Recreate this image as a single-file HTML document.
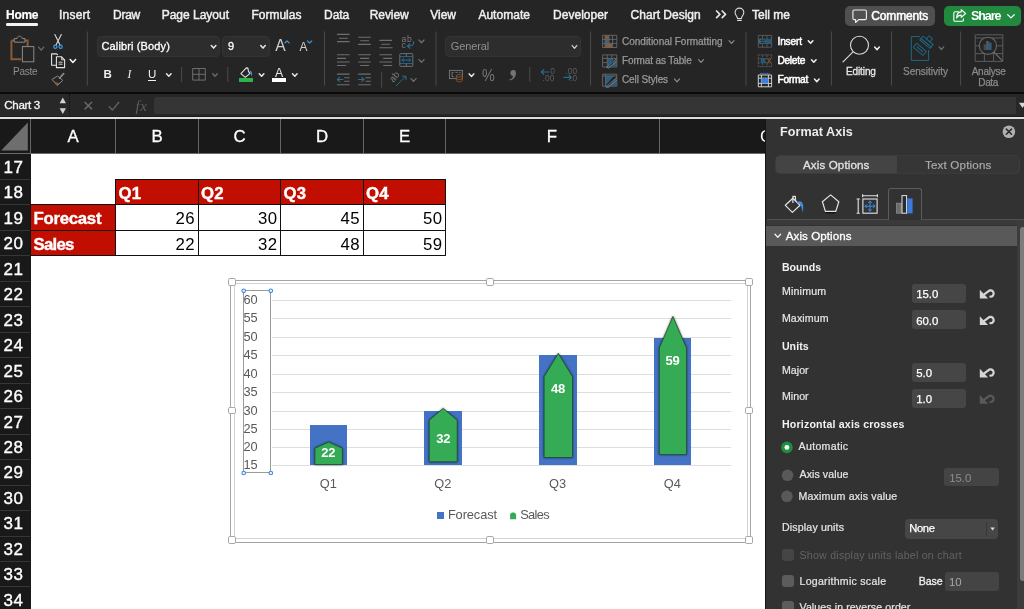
<!DOCTYPE html>
<html><head><meta charset="utf-8"><title>Excel</title>
<style>
html,body{margin:0;padding:0;background:#252525;}
body{width:1024px;height:609px;overflow:hidden;position:relative;font-family:"Liberation Sans",sans-serif;}
.t{position:absolute;white-space:pre;height:20px;display:block;}
.r{position:absolute;display:block;overflow:visible;}
#w{position:absolute;left:0;top:0;width:1024px;height:609px;overflow:hidden;will-change:transform;}
</style></head><body><div id="w">
<div class="r" style="left:0.00px;top:0.00px;width:1024.00px;height:92.30px;background:#252525;"></div>
<span class="t " style="left:6.00px;top:4.60px;font:700 12px 'Liberation Sans', sans-serif;line-height:20px;color:#ffffff;letter-spacing:-0.286px;-webkit-text-stroke:0.2px #ffffff;">Home</span>
<span class="t " style="left:59.00px;top:4.60px;font:400 12px 'Liberation Sans', sans-serif;line-height:20px;color:#f0f0f0;letter-spacing:0.214px;-webkit-text-stroke:0.45px #f0f0f0;">Insert</span>
<span class="t " style="left:113.00px;top:4.60px;font:400 12px 'Liberation Sans', sans-serif;line-height:20px;color:#f0f0f0;letter-spacing:-0.254px;-webkit-text-stroke:0.45px #f0f0f0;">Draw</span>
<span class="t " style="left:161.70px;top:4.60px;font:400 12px 'Liberation Sans', sans-serif;line-height:20px;color:#f0f0f0;letter-spacing:-0.008px;-webkit-text-stroke:0.45px #f0f0f0;">Page Layout</span>
<span class="t " style="left:251.40px;top:4.60px;font:400 12px 'Liberation Sans', sans-serif;line-height:20px;color:#f0f0f0;letter-spacing:0.011px;-webkit-text-stroke:0.45px #f0f0f0;">Formulas</span>
<span class="t " style="left:324.00px;top:4.60px;font:400 12px 'Liberation Sans', sans-serif;line-height:20px;color:#f0f0f0;letter-spacing:-0.040px;-webkit-text-stroke:0.45px #f0f0f0;">Data</span>
<span class="t " style="left:369.80px;top:4.60px;font:400 12px 'Liberation Sans', sans-serif;line-height:20px;color:#f0f0f0;letter-spacing:-0.093px;-webkit-text-stroke:0.45px #f0f0f0;">Review</span>
<span class="t " style="left:430.20px;top:4.60px;font:400 12px 'Liberation Sans', sans-serif;line-height:20px;color:#f0f0f0;letter-spacing:0.001px;-webkit-text-stroke:0.45px #f0f0f0;">View</span>
<span class="t " style="left:478.40px;top:4.60px;font:400 12px 'Liberation Sans', sans-serif;line-height:20px;color:#f0f0f0;letter-spacing:0.028px;-webkit-text-stroke:0.45px #f0f0f0;">Automate</span>
<span class="t " style="left:553.00px;top:4.60px;font:400 12px 'Liberation Sans', sans-serif;line-height:20px;color:#f0f0f0;letter-spacing:0.033px;-webkit-text-stroke:0.45px #f0f0f0;">Developer</span>
<span class="t " style="left:630.60px;top:4.60px;font:400 12px 'Liberation Sans', sans-serif;line-height:20px;color:#f0f0f0;letter-spacing:0.006px;-webkit-text-stroke:0.45px #f0f0f0;">Chart Design</span>
<span class="t " style="left:752.00px;top:4.60px;font:400 12px 'Liberation Sans', sans-serif;line-height:20px;color:#f0f0f0;letter-spacing:-0.002px;-webkit-text-stroke:0.45px #f0f0f0;">Tell me</span>
<div class="r" style="left:6.00px;top:23.30px;width:32.30px;height:2.50px;background:#f2f2f2;border-radius:1.2px;"></div>
<div class="r" style="left:845.00px;top:5.50px;width:90.00px;height:20.70px;background:#505050;border-radius:5px;"></div>
<span class="t " style="left:871.30px;top:6.20px;font:400 12px 'Liberation Sans', sans-serif;line-height:20px;color:#ffffff;letter-spacing:-0.164px;-webkit-text-stroke:0.5px #ffffff;">Comments</span>
<div class="r" style="left:944.00px;top:5.50px;width:76.50px;height:20.70px;background:#218a3e;border-radius:5px;"></div>
<span class="t " style="left:971.00px;top:6.10px;font:700 12.5px 'Liberation Sans', sans-serif;line-height:20px;color:#ffffff;letter-spacing:-1.070px;">Share</span>
<span class="t " style="left:13.00px;top:61.60px;font:400 10px 'Liberation Sans', sans-serif;line-height:20px;color:#8f8f8f;letter-spacing:-0.276px;">Paste</span>
<div class="r" style="left:97.00px;top:36.20px;width:123.30px;height:20.50px;background:#2d2d2d;border-radius:4px;box-sizing:border-box;border:1px solid #343434;"></div>
<div class="r" style="left:222.30px;top:36.20px;width:47.50px;height:20.50px;background:#2d2d2d;border-radius:4px;box-sizing:border-box;border:1px solid #343434;"></div>
<span class="t " style="left:101.50px;top:35.90px;font:400 11px 'Liberation Sans', sans-serif;line-height:20px;color:#ffffff;letter-spacing:0.133px;-webkit-text-stroke:0.3px #ffffff;">Calibri (Body)</span>
<span class="t " style="left:228.00px;top:36.20px;font:400 11px 'Liberation Sans', sans-serif;line-height:20px;color:#ffffff;-webkit-text-stroke:0.3px #ffffff;">9</span>
<span class="t " style="left:103.60px;top:64.20px;font:700 11.5px 'Liberation Sans', sans-serif;line-height:20px;color:#f0f0f0;">B</span>
<span class="t " style="left:127.50px;top:64.20px;font:italic 400 11.5px 'Liberation Serif', serif;line-height:20px;color:#f0f0f0;">I</span>
<span class="t " style="left:148.00px;top:63.80px;font:400 11.5px 'Liberation Sans', sans-serif;line-height:20px;color:#f0f0f0;">U</span>
<div class="r" style="left:147.80px;top:80.30px;width:8.40px;height:1.00px;background:#f0f0f0;"></div>
<div class="r" style="left:445.30px;top:36.30px;width:135.70px;height:20.40px;background:#2d2d2d;border-radius:4px;box-sizing:border-box;border:1px solid #343434;"></div>
<span class="t " style="left:450.80px;top:35.90px;font:400 11px 'Liberation Sans', sans-serif;line-height:20px;color:#8f8f8f;letter-spacing:-0.134px;">General</span>
<span class="t" style="left:482.2px;top:65.5px;font:400 16.6px 'Liberation Sans',sans-serif;line-height:20px;color:#757575;transform:scaleX(0.87);transform-origin:0 0;">%</span>
<span class="t " style="left:622.00px;top:31.60px;font:400 10px 'Liberation Sans', sans-serif;line-height:20px;color:#9a9a9a;letter-spacing:-0.005px;-webkit-text-stroke:0.25px #9a9a9a;">Conditional Formatting</span>
<span class="t " style="left:622.00px;top:50.70px;font:400 10px 'Liberation Sans', sans-serif;line-height:20px;color:#9a9a9a;letter-spacing:-0.128px;-webkit-text-stroke:0.25px #9a9a9a;">Format as Table</span>
<span class="t " style="left:622.00px;top:70.00px;font:400 10px 'Liberation Sans', sans-serif;line-height:20px;color:#9a9a9a;letter-spacing:-0.114px;-webkit-text-stroke:0.25px #9a9a9a;">Cell Styles</span>
<span class="t " style="left:777.50px;top:31.50px;font:400 10.2px 'Liberation Sans', sans-serif;line-height:20px;color:#ffffff;letter-spacing:-0.197px;-webkit-text-stroke:0.5px #ffffff;">Insert</span>
<span class="t " style="left:777.50px;top:50.50px;font:400 10.2px 'Liberation Sans', sans-serif;line-height:20px;color:#ffffff;letter-spacing:-0.326px;-webkit-text-stroke:0.5px #ffffff;">Delete</span>
<span class="t " style="left:777.50px;top:70.00px;font:400 10.2px 'Liberation Sans', sans-serif;line-height:20px;color:#ffffff;letter-spacing:-0.294px;-webkit-text-stroke:0.5px #ffffff;">Format</span>
<span class="t " style="left:846.00px;top:61.50px;font:400 10px 'Liberation Sans', sans-serif;line-height:20px;color:#e6e6e6;letter-spacing:-0.111px;-webkit-text-stroke:0.3px #e6e6e6;">Editing</span>
<span class="t " style="left:903.00px;top:61.70px;font:400 10px 'Liberation Sans', sans-serif;line-height:20px;color:#8a8a8a;letter-spacing:-0.001px;-webkit-text-stroke:0.25px #8a8a8a;">Sensitivity</span>
<span class="t " style="left:971.70px;top:62.20px;font:400 10px 'Liberation Sans', sans-serif;line-height:20px;color:#8a8a8a;letter-spacing:-0.240px;-webkit-text-stroke:0.25px #8a8a8a;">Analyse</span>
<span class="t " style="left:978.30px;top:72.80px;font:400 10px 'Liberation Sans', sans-serif;line-height:20px;color:#8a8a8a;letter-spacing:-0.356px;-webkit-text-stroke:0.25px #8a8a8a;">Data</span>
<div class="r" style="left:0.00px;top:92.40px;width:1024.00px;height:1.80px;background:#0b0b0b;"></div>
<div class="r" style="left:0.00px;top:94.10px;width:1024.00px;height:22.30px;background:#272727;"></div>
<div class="r" style="left:0.00px;top:94.40px;width:70.00px;height:22.00px;background:#282828;"></div>
<div class="r" style="left:69.4px;top:94.4px;width:0;height:22px;border-left:1px dotted #101010;"></div>
<div class="r" style="left:0.00px;top:115.80px;width:1024.00px;height:1.10px;background:#1c1c1c;"></div>
<div class="r" style="left:154.30px;top:97.20px;width:861.80px;height:16.60px;background:#353535;border-radius:3px 0 0 3px;"></div>
<div class="r" style="left:0.00px;top:116.90px;width:1024.00px;height:2.40px;background:#dedede;"></div>
<span class="t " style="left:4.30px;top:95.40px;font:400 11.6px 'Liberation Sans', sans-serif;line-height:20px;color:#f4f4f4;letter-spacing:-0.333px;-webkit-text-stroke:0.3px #f4f4f4;">Chart 3</span>
<span class="t " style="left:135.50px;top:95.60px;font:italic 400 15px 'Liberation Serif', serif;line-height:20px;color:#5e5e5e;letter-spacing:0.536px;">fx</span>
<div class="r" style="left:0.00px;top:119.00px;width:766.00px;height:490.00px;background:#ffffff;"></div>
<div class="r" style="left:0.00px;top:119.00px;width:766.00px;height:34.40px;background:#191919;"></div>
<div class="r" style="left:0.00px;top:119.00px;width:30.60px;height:490.00px;background:#191919;"></div>
<div class="r" style="left:30.10px;top:119.00px;width:1.00px;height:34.40px;background:#666666;"></div>
<div class="r" style="left:115.10px;top:119.00px;width:1.00px;height:34.40px;background:#666666;"></div>
<div class="r" style="left:197.70px;top:119.00px;width:1.00px;height:34.40px;background:#666666;"></div>
<div class="r" style="left:280.20px;top:119.00px;width:1.00px;height:34.40px;background:#666666;"></div>
<div class="r" style="left:362.70px;top:119.00px;width:1.00px;height:34.40px;background:#666666;"></div>
<div class="r" style="left:445.20px;top:119.00px;width:1.00px;height:34.40px;background:#666666;"></div>
<div class="r" style="left:658.60px;top:119.00px;width:1.00px;height:34.40px;background:#666666;"></div>
<div class="r" style="left:0.00px;top:152.90px;width:766.00px;height:0.90px;background:#6a6a6a;"></div>
<span class="t " style="left:-26.80px;width:200px;text-align:center;top:126.60px;font:400 16.8px 'Liberation Sans', sans-serif;line-height:20px;color:#ffffff;-webkit-text-stroke:0.3px #ffffff;">A</span>
<span class="t " style="left:57.00px;width:200px;text-align:center;top:126.60px;font:400 16.8px 'Liberation Sans', sans-serif;line-height:20px;color:#ffffff;-webkit-text-stroke:0.3px #ffffff;">B</span>
<span class="t " style="left:139.50px;width:200px;text-align:center;top:126.60px;font:400 16.8px 'Liberation Sans', sans-serif;line-height:20px;color:#ffffff;-webkit-text-stroke:0.3px #ffffff;">C</span>
<span class="t " style="left:222.00px;width:200px;text-align:center;top:126.60px;font:400 16.8px 'Liberation Sans', sans-serif;line-height:20px;color:#ffffff;-webkit-text-stroke:0.3px #ffffff;">D</span>
<span class="t " style="left:304.50px;width:200px;text-align:center;top:126.60px;font:400 16.8px 'Liberation Sans', sans-serif;line-height:20px;color:#ffffff;-webkit-text-stroke:0.3px #ffffff;">E</span>
<span class="t " style="left:452.00px;width:200px;text-align:center;top:126.60px;font:400 16.8px 'Liberation Sans', sans-serif;line-height:20px;color:#ffffff;-webkit-text-stroke:0.3px #ffffff;">F</span>
<span class="t " style="left:760.00px;top:126.60px;font:400 16.8px 'Liberation Sans', sans-serif;line-height:20px;color:#ffffff;clip-path:inset(0 6.5px 0 0);">G</span>
<span class="t " style="left:3.50px;top:157.80px;font:400 17px 'Liberation Sans', sans-serif;line-height:20px;color:#ffffff;letter-spacing:0.639px;-webkit-text-stroke:0.35px #ffffff;">17</span>
<div class="r" style="left:0.00px;top:178.97px;width:30.00px;height:1.00px;background:#363636;"></div>
<span class="t " style="left:3.50px;top:183.27px;font:400 17px 'Liberation Sans', sans-serif;line-height:20px;color:#ffffff;letter-spacing:0.639px;-webkit-text-stroke:0.35px #ffffff;">18</span>
<div class="r" style="left:0.00px;top:204.44px;width:30.00px;height:1.00px;background:#363636;"></div>
<span class="t " style="left:3.50px;top:208.74px;font:400 17px 'Liberation Sans', sans-serif;line-height:20px;color:#ffffff;letter-spacing:0.639px;-webkit-text-stroke:0.35px #ffffff;">19</span>
<div class="r" style="left:0.00px;top:229.91px;width:30.00px;height:1.00px;background:#363636;"></div>
<span class="t " style="left:3.50px;top:234.21px;font:400 17px 'Liberation Sans', sans-serif;line-height:20px;color:#ffffff;letter-spacing:0.639px;-webkit-text-stroke:0.35px #ffffff;">20</span>
<div class="r" style="left:0.00px;top:255.38px;width:30.00px;height:1.00px;background:#363636;"></div>
<span class="t " style="left:3.50px;top:259.68px;font:400 17px 'Liberation Sans', sans-serif;line-height:20px;color:#ffffff;letter-spacing:0.639px;-webkit-text-stroke:0.35px #ffffff;">21</span>
<div class="r" style="left:0.00px;top:280.85px;width:30.00px;height:1.00px;background:#363636;"></div>
<span class="t " style="left:3.50px;top:285.15px;font:400 17px 'Liberation Sans', sans-serif;line-height:20px;color:#ffffff;letter-spacing:0.639px;-webkit-text-stroke:0.35px #ffffff;">22</span>
<div class="r" style="left:0.00px;top:306.32px;width:30.00px;height:1.00px;background:#363636;"></div>
<span class="t " style="left:3.50px;top:310.62px;font:400 17px 'Liberation Sans', sans-serif;line-height:20px;color:#ffffff;letter-spacing:0.639px;-webkit-text-stroke:0.35px #ffffff;">23</span>
<div class="r" style="left:0.00px;top:331.79px;width:30.00px;height:1.00px;background:#363636;"></div>
<span class="t " style="left:3.50px;top:336.09px;font:400 17px 'Liberation Sans', sans-serif;line-height:20px;color:#ffffff;letter-spacing:0.639px;-webkit-text-stroke:0.35px #ffffff;">24</span>
<div class="r" style="left:0.00px;top:357.26px;width:30.00px;height:1.00px;background:#363636;"></div>
<span class="t " style="left:3.50px;top:361.56px;font:400 17px 'Liberation Sans', sans-serif;line-height:20px;color:#ffffff;letter-spacing:0.639px;-webkit-text-stroke:0.35px #ffffff;">25</span>
<div class="r" style="left:0.00px;top:382.73px;width:30.00px;height:1.00px;background:#363636;"></div>
<span class="t " style="left:3.50px;top:387.03px;font:400 17px 'Liberation Sans', sans-serif;line-height:20px;color:#ffffff;letter-spacing:0.639px;-webkit-text-stroke:0.35px #ffffff;">26</span>
<div class="r" style="left:0.00px;top:408.20px;width:30.00px;height:1.00px;background:#363636;"></div>
<span class="t " style="left:3.50px;top:412.50px;font:400 17px 'Liberation Sans', sans-serif;line-height:20px;color:#ffffff;letter-spacing:0.639px;-webkit-text-stroke:0.35px #ffffff;">27</span>
<div class="r" style="left:0.00px;top:433.67px;width:30.00px;height:1.00px;background:#363636;"></div>
<span class="t " style="left:3.50px;top:437.97px;font:400 17px 'Liberation Sans', sans-serif;line-height:20px;color:#ffffff;letter-spacing:0.639px;-webkit-text-stroke:0.35px #ffffff;">28</span>
<div class="r" style="left:0.00px;top:459.14px;width:30.00px;height:1.00px;background:#363636;"></div>
<span class="t " style="left:3.50px;top:463.44px;font:400 17px 'Liberation Sans', sans-serif;line-height:20px;color:#ffffff;letter-spacing:0.639px;-webkit-text-stroke:0.35px #ffffff;">29</span>
<div class="r" style="left:0.00px;top:484.61px;width:30.00px;height:1.00px;background:#363636;"></div>
<span class="t " style="left:3.50px;top:488.91px;font:400 17px 'Liberation Sans', sans-serif;line-height:20px;color:#ffffff;letter-spacing:0.639px;-webkit-text-stroke:0.35px #ffffff;">30</span>
<div class="r" style="left:0.00px;top:510.08px;width:30.00px;height:1.00px;background:#363636;"></div>
<span class="t " style="left:3.50px;top:514.38px;font:400 17px 'Liberation Sans', sans-serif;line-height:20px;color:#ffffff;letter-spacing:0.639px;-webkit-text-stroke:0.35px #ffffff;">31</span>
<div class="r" style="left:0.00px;top:535.55px;width:30.00px;height:1.00px;background:#363636;"></div>
<span class="t " style="left:3.50px;top:539.85px;font:400 17px 'Liberation Sans', sans-serif;line-height:20px;color:#ffffff;letter-spacing:0.639px;-webkit-text-stroke:0.35px #ffffff;">32</span>
<div class="r" style="left:0.00px;top:561.02px;width:30.00px;height:1.00px;background:#363636;"></div>
<span class="t " style="left:3.50px;top:565.32px;font:400 17px 'Liberation Sans', sans-serif;line-height:20px;color:#ffffff;letter-spacing:0.639px;-webkit-text-stroke:0.35px #ffffff;">33</span>
<div class="r" style="left:0.00px;top:586.49px;width:30.00px;height:1.00px;background:#363636;"></div>
<span class="t " style="left:3.50px;top:590.79px;font:400 17px 'Liberation Sans', sans-serif;line-height:20px;color:#ffffff;letter-spacing:0.639px;-webkit-text-stroke:0.35px #ffffff;">34</span>
<div class="r" style="left:115.60px;top:179.40px;width:330.60px;height:25.40px;background:#c10e00;"></div>
<div class="r" style="left:30.60px;top:204.80px;width:85.00px;height:50.80px;background:#c10e00;"></div>
<div class="r" style="left:115.10px;top:178.80px;width:331.10px;height:1.20px;background:#111;"></div>
<div class="r" style="left:30.10px;top:204.20px;width:416.10px;height:1.20px;background:#111;"></div>
<div class="r" style="left:30.10px;top:229.60px;width:416.10px;height:1.20px;background:#111;"></div>
<div class="r" style="left:30.10px;top:255.00px;width:416.10px;height:1.20px;background:#111;"></div>
<div class="r" style="left:115.00px;top:178.80px;width:1.20px;height:76.80px;background:#111;"></div>
<div class="r" style="left:197.60px;top:178.80px;width:1.20px;height:76.80px;background:#111;"></div>
<div class="r" style="left:280.10px;top:178.80px;width:1.20px;height:76.80px;background:#111;"></div>
<div class="r" style="left:362.60px;top:178.80px;width:1.20px;height:76.80px;background:#111;"></div>
<div class="r" style="left:445.10px;top:178.80px;width:1.20px;height:76.80px;background:#111;"></div>
<div class="r" style="left:445.30px;top:178.80px;width:1.20px;height:76.80px;background:#111;"></div>
<div class="r" style="left:30.00px;top:204.80px;width:1.20px;height:51.40px;background:#111;"></div>
<span class="t " style="left:118.40px;top:183.80px;font:700 16.8px 'Liberation Sans', sans-serif;line-height:20px;color:#ffffff;letter-spacing:0.305px;-webkit-text-stroke:0.4px #ffffff;">Q1</span>
<span class="t " style="left:201.00px;top:183.80px;font:700 16.8px 'Liberation Sans', sans-serif;line-height:20px;color:#ffffff;letter-spacing:0.305px;-webkit-text-stroke:0.4px #ffffff;">Q2</span>
<span class="t " style="left:283.50px;top:183.80px;font:700 16.8px 'Liberation Sans', sans-serif;line-height:20px;color:#ffffff;letter-spacing:0.305px;-webkit-text-stroke:0.4px #ffffff;">Q3</span>
<span class="t " style="left:366.00px;top:183.80px;font:700 16.8px 'Liberation Sans', sans-serif;line-height:20px;color:#ffffff;letter-spacing:0.305px;-webkit-text-stroke:0.4px #ffffff;">Q4</span>
<span class="t " style="left:33.60px;top:209.20px;font:700 16.8px 'Liberation Sans', sans-serif;line-height:20px;color:#ffffff;letter-spacing:-0.294px;-webkit-text-stroke:0.4px #ffffff;">Forecast</span>
<span class="t " style="left:33.60px;top:234.60px;font:700 16.8px 'Liberation Sans', sans-serif;line-height:20px;color:#ffffff;letter-spacing:-0.772px;-webkit-text-stroke:0.4px #ffffff;">Sales</span>
<span class="t " style="right:828.80px;top:209.20px;font:400 16.8px 'Liberation Sans', sans-serif;line-height:20px;color:#000000;letter-spacing:0.5px;">26</span>
<span class="t " style="right:746.30px;top:209.20px;font:400 16.8px 'Liberation Sans', sans-serif;line-height:20px;color:#000000;letter-spacing:0.5px;">30</span>
<span class="t " style="right:663.80px;top:209.20px;font:400 16.8px 'Liberation Sans', sans-serif;line-height:20px;color:#000000;letter-spacing:0.5px;">45</span>
<span class="t " style="right:581.30px;top:209.20px;font:400 16.8px 'Liberation Sans', sans-serif;line-height:20px;color:#000000;letter-spacing:0.5px;">50</span>
<span class="t " style="right:828.80px;top:234.60px;font:400 16.8px 'Liberation Sans', sans-serif;line-height:20px;color:#000000;letter-spacing:0.5px;">22</span>
<span class="t " style="right:746.30px;top:234.60px;font:400 16.8px 'Liberation Sans', sans-serif;line-height:20px;color:#000000;letter-spacing:0.5px;">32</span>
<span class="t " style="right:663.80px;top:234.60px;font:400 16.8px 'Liberation Sans', sans-serif;line-height:20px;color:#000000;letter-spacing:0.5px;">48</span>
<span class="t " style="right:581.30px;top:234.60px;font:400 16.8px 'Liberation Sans', sans-serif;line-height:20px;color:#000000;letter-spacing:0.5px;">59</span>
<div class="r" style="left:230px;top:279.9px;width:521.4px;height:262.8px;box-sizing:border-box;border:1.1px solid #a4a4a4;background:#fff;"></div>
<div class="r" style="left:233.5px;top:283px;width:514.4px;height:256.2px;box-sizing:border-box;border:1.1px solid #d2d2d2;background:#fff;"></div>
<div class="r" style="left:271.70px;top:299.70px;width:459.00px;height:1.00px;background:#dedede;"></div>
<div class="r" style="left:271.70px;top:318.20px;width:459.00px;height:1.00px;background:#dedede;"></div>
<div class="r" style="left:271.70px;top:336.60px;width:459.00px;height:1.00px;background:#dedede;"></div>
<div class="r" style="left:271.70px;top:354.90px;width:459.00px;height:1.00px;background:#dedede;"></div>
<div class="r" style="left:271.70px;top:373.50px;width:459.00px;height:1.00px;background:#dedede;"></div>
<div class="r" style="left:271.70px;top:392.00px;width:459.00px;height:1.00px;background:#dedede;"></div>
<div class="r" style="left:271.70px;top:410.70px;width:459.00px;height:1.00px;background:#dedede;"></div>
<div class="r" style="left:271.70px;top:428.80px;width:459.00px;height:1.00px;background:#dedede;"></div>
<div class="r" style="left:271.70px;top:447.20px;width:459.00px;height:1.00px;background:#dedede;"></div>
<div class="r" style="left:271.70px;top:464.90px;width:459.00px;height:1.00px;background:#dedede;"></div>
<div class="r" style="left:243.2px;top:290.3px;width:28.1px;height:183.2px;box-sizing:border-box;border:1.1px solid #9a9a9a;"></div>
<span class="t " style="left:243.40px;top:289.70px;font:400 12.8px 'Liberation Sans', sans-serif;line-height:20px;color:#595959;letter-spacing:0.033px;">60</span>
<span class="t " style="left:243.40px;top:308.20px;font:400 12.8px 'Liberation Sans', sans-serif;line-height:20px;color:#595959;letter-spacing:0.033px;">55</span>
<span class="t " style="left:243.40px;top:326.60px;font:400 12.8px 'Liberation Sans', sans-serif;line-height:20px;color:#595959;letter-spacing:0.033px;">50</span>
<span class="t " style="left:243.40px;top:344.90px;font:400 12.8px 'Liberation Sans', sans-serif;line-height:20px;color:#595959;letter-spacing:0.033px;">45</span>
<span class="t " style="left:243.40px;top:363.50px;font:400 12.8px 'Liberation Sans', sans-serif;line-height:20px;color:#595959;letter-spacing:0.033px;">40</span>
<span class="t " style="left:243.40px;top:382.00px;font:400 12.8px 'Liberation Sans', sans-serif;line-height:20px;color:#595959;letter-spacing:0.033px;">35</span>
<span class="t " style="left:243.40px;top:400.70px;font:400 12.8px 'Liberation Sans', sans-serif;line-height:20px;color:#595959;letter-spacing:0.033px;">30</span>
<span class="t " style="left:243.40px;top:418.80px;font:400 12.8px 'Liberation Sans', sans-serif;line-height:20px;color:#595959;letter-spacing:0.033px;">25</span>
<span class="t " style="left:243.40px;top:437.20px;font:400 12.8px 'Liberation Sans', sans-serif;line-height:20px;color:#595959;letter-spacing:0.033px;">20</span>
<span class="t " style="left:243.40px;top:454.90px;font:400 12.8px 'Liberation Sans', sans-serif;line-height:20px;color:#595959;letter-spacing:0.033px;">15</span>
<div class="r" style="left:310.10px;top:425.40px;width:36.70px;height:40.00px;background:#4472c4;"></div>
<div class="r" style="left:424.00px;top:410.80px;width:38.00px;height:54.60px;background:#4472c4;"></div>
<div class="r" style="left:539.30px;top:355.40px;width:37.40px;height:110.00px;background:#4472c4;"></div>
<div class="r" style="left:653.50px;top:337.70px;width:37.40px;height:127.70px;background:#4472c4;"></div>
<span class="t " style="left:228.20px;width:200px;text-align:center;top:443.40px;font:700 13px 'Liberation Sans', sans-serif;line-height:20px;color:#ffffff;z-index:5;letter-spacing:-0.3px;">22</span>
<span class="t " style="left:343.20px;width:200px;text-align:center;top:429.10px;font:700 13px 'Liberation Sans', sans-serif;line-height:20px;color:#ffffff;z-index:5;letter-spacing:-0.3px;">32</span>
<span class="t " style="left:457.90px;width:200px;text-align:center;top:378.90px;font:700 13px 'Liberation Sans', sans-serif;line-height:20px;color:#ffffff;z-index:5;letter-spacing:-0.3px;">48</span>
<span class="t " style="left:572.50px;width:200px;text-align:center;top:350.80px;font:700 13px 'Liberation Sans', sans-serif;line-height:20px;color:#ffffff;z-index:5;letter-spacing:-0.3px;">59</span>
<span class="t " style="left:228.40px;width:200px;text-align:center;top:473.60px;font:400 12.8px 'Liberation Sans', sans-serif;line-height:20px;color:#595959;">Q1</span>
<span class="t " style="left:342.90px;width:200px;text-align:center;top:473.60px;font:400 12.8px 'Liberation Sans', sans-serif;line-height:20px;color:#595959;">Q2</span>
<span class="t " style="left:457.60px;width:200px;text-align:center;top:473.60px;font:400 12.8px 'Liberation Sans', sans-serif;line-height:20px;color:#595959;">Q3</span>
<span class="t " style="left:572.30px;width:200px;text-align:center;top:473.60px;font:400 12.8px 'Liberation Sans', sans-serif;line-height:20px;color:#595959;">Q4</span>
<div class="r" style="left:436.60px;top:511.90px;width:7.40px;height:7.40px;background:#4472c4;"></div>
<span class="t " style="left:447.90px;top:504.90px;font:400 12.8px 'Liberation Sans', sans-serif;line-height:20px;color:#595959;letter-spacing:-0.087px;">Forecast</span>
<span class="t " style="left:520.20px;top:504.90px;font:400 12.8px 'Liberation Sans', sans-serif;line-height:20px;color:#595959;letter-spacing:-0.643px;">Sales</span>
<div class="r" style="left:228.1px;top:277.8px;width:7.7px;height:7.8px;box-sizing:border-box;border:1px solid #a8a8a8;border-radius:1.8px;background:#fff;"></div>
<div class="r" style="left:486.1px;top:277.8px;width:7.7px;height:7.8px;box-sizing:border-box;border:1px solid #a8a8a8;border-radius:1.8px;background:#fff;"></div>
<div class="r" style="left:745.0px;top:277.8px;width:7.7px;height:7.8px;box-sizing:border-box;border:1px solid #a8a8a8;border-radius:1.8px;background:#fff;"></div>
<div class="r" style="left:228.1px;top:406.5px;width:7.7px;height:7.8px;box-sizing:border-box;border:1px solid #a8a8a8;border-radius:1.8px;background:#fff;"></div>
<div class="r" style="left:745.0px;top:406.5px;width:7.7px;height:7.8px;box-sizing:border-box;border:1px solid #a8a8a8;border-radius:1.8px;background:#fff;"></div>
<div class="r" style="left:228.1px;top:536.2px;width:7.7px;height:7.8px;box-sizing:border-box;border:1px solid #a8a8a8;border-radius:1.8px;background:#fff;"></div>
<div class="r" style="left:486.1px;top:536.2px;width:7.7px;height:7.8px;box-sizing:border-box;border:1px solid #a8a8a8;border-radius:1.8px;background:#fff;"></div>
<div class="r" style="left:745.0px;top:536.2px;width:7.7px;height:7.8px;box-sizing:border-box;border:1px solid #a8a8a8;border-radius:1.8px;background:#fff;"></div>
<div class="r" style="left:765.20px;top:119.00px;width:259.00px;height:490.00px;background:#161616;"></div>
<div class="r" style="left:766.20px;top:119.00px;width:257.80px;height:490.00px;background:#323232;"></div>
<span class="t " style="left:780.00px;top:121.60px;font:700 12.6px 'Liberation Sans', sans-serif;line-height:20px;color:#ececec;letter-spacing:0.043px;">Format Axis</span>
<div class="r" style="left:776.00px;top:156.00px;width:242.50px;height:17.40px;background:#363636;border-radius:4px;box-shadow:0 0 0 0.6px #454545;"></div>
<div class="r" style="left:776.00px;top:156.00px;width:120.60px;height:17.40px;background:#444444;border-radius:4px 0 0 4px;"></div>
<span class="t " style="left:803.00px;top:154.70px;font:400 11.6px 'Liberation Sans', sans-serif;line-height:20px;color:#e2e2e2;letter-spacing:0.117px;-webkit-text-stroke:0.3px #e2e2e2;">Axis Options</span>
<span class="t " style="left:925.00px;top:154.70px;font:400 11.6px 'Liberation Sans', sans-serif;line-height:20px;color:#a8a8a8;letter-spacing:0.171px;-webkit-text-stroke:0.2px #a8a8a8;">Text Options</span>
<div class="r" style="left:766.60px;top:219.30px;width:257.40px;height:1.00px;background:#505050;"></div>
<div class="r" style="left:766.60px;top:220.30px;width:257.40px;height:5.00px;background:#3a3a3a;"></div>
<div class="r" style="left:887.6px;top:188.3px;width:34.4px;height:32px;box-sizing:border-box;border:1px solid #5c5c5c;border-bottom:none;border-radius:3px 3px 0 0;background:#323232;"></div>
<div class="r" style="left:766.20px;top:225.60px;width:250.40px;height:20.60px;background:#595959;"></div>
<div class="r" style="left:1016.60px;top:220.30px;width:7.40px;height:389.00px;background:#3c3c3c;"></div>
<div class="r" style="left:1019.60px;top:227.30px;width:6.00px;height:353.40px;background:#7c7c7c;border-radius:3px;"></div>
<span class="t " style="left:785.80px;top:225.80px;font:400 11.6px 'Liberation Sans', sans-serif;line-height:20px;color:#ffffff;letter-spacing:0.051px;-webkit-text-stroke:0.3px #ffffff;">Axis Options</span>
<span class="t " style="left:781.90px;top:256.80px;font:700 10.6px 'Liberation Sans', sans-serif;line-height:20px;color:#f2f2f2;letter-spacing:-0.056px;">Bounds</span>
<span class="t " style="left:781.90px;top:281.30px;font:400 10.6px 'Liberation Sans', sans-serif;line-height:20px;color:#e6e6e6;letter-spacing:0.204px;-webkit-text-stroke:0.2px #e6e6e6;">Minimum</span>
<span class="t " style="left:781.90px;top:307.60px;font:400 10.6px 'Liberation Sans', sans-serif;line-height:20px;color:#e6e6e6;letter-spacing:0.140px;-webkit-text-stroke:0.2px #e6e6e6;">Maximum</span>
<span class="t " style="left:781.90px;top:335.50px;font:700 10.6px 'Liberation Sans', sans-serif;line-height:20px;color:#f2f2f2;letter-spacing:0.063px;">Units</span>
<span class="t " style="left:781.90px;top:360.20px;font:400 10.6px 'Liberation Sans', sans-serif;line-height:20px;color:#e6e6e6;letter-spacing:0.060px;-webkit-text-stroke:0.2px #e6e6e6;">Major</span>
<span class="t " style="left:781.90px;top:386.20px;font:400 10.6px 'Liberation Sans', sans-serif;line-height:20px;color:#e6e6e6;letter-spacing:0.060px;-webkit-text-stroke:0.2px #e6e6e6;">Minor</span>
<div class="r" style="left:911.50px;top:283.50px;width:54.70px;height:19.40px;background:#464646;border-radius:3px;"></div>
<span class="t " style="left:916.20px;top:284.00px;font:400 11.4px 'Liberation Sans', sans-serif;line-height:20px;color:#ffffff;-webkit-text-stroke:0.25px #ffffff;">15.0</span>
<div class="r" style="left:911.50px;top:310.00px;width:54.70px;height:19.40px;background:#464646;border-radius:3px;"></div>
<span class="t " style="left:916.20px;top:310.50px;font:400 11.4px 'Liberation Sans', sans-serif;line-height:20px;color:#ffffff;-webkit-text-stroke:0.25px #ffffff;">60.0</span>
<div class="r" style="left:911.50px;top:362.50px;width:54.70px;height:19.40px;background:#464646;border-radius:3px;"></div>
<span class="t " style="left:916.20px;top:363.00px;font:400 11.4px 'Liberation Sans', sans-serif;line-height:20px;color:#ffffff;-webkit-text-stroke:0.25px #ffffff;">5.0</span>
<div class="r" style="left:911.50px;top:388.80px;width:54.70px;height:19.40px;background:#464646;border-radius:3px;"></div>
<span class="t " style="left:916.20px;top:389.30px;font:400 11.4px 'Liberation Sans', sans-serif;line-height:20px;color:#ffffff;-webkit-text-stroke:0.25px #ffffff;">1.0</span>
<span class="t " style="left:782.00px;top:414.40px;font:700 10.6px 'Liberation Sans', sans-serif;line-height:20px;color:#f2f2f2;letter-spacing:0.184px;">Horizontal axis crosses</span>
<span class="t " style="left:798.60px;top:436.30px;font:400 10.6px 'Liberation Sans', sans-serif;line-height:20px;color:#e6e6e6;letter-spacing:0.299px;-webkit-text-stroke:0.2px #e6e6e6;">Automatic</span>
<span class="t " style="left:799.50px;top:464.40px;font:400 10.6px 'Liberation Sans', sans-serif;line-height:20px;color:#e6e6e6;letter-spacing:0.080px;-webkit-text-stroke:0.2px #e6e6e6;">Axis value</span>
<span class="t " style="left:798.60px;top:485.50px;font:400 10.6px 'Liberation Sans', sans-serif;line-height:20px;color:#e6e6e6;letter-spacing:0.152px;-webkit-text-stroke:0.2px #e6e6e6;">Maximum axis value</span>
<div class="r" style="left:943.70px;top:467.80px;width:55.30px;height:18.40px;background:#444444;border-radius:3px;"></div>
<span class="t " style="left:949.20px;top:467.80px;font:400 11.4px 'Liberation Sans', sans-serif;line-height:20px;color:#8c8c8c;">15.0</span>
<span class="t " style="left:782.00px;top:516.90px;font:400 10.6px 'Liberation Sans', sans-serif;line-height:20px;color:#e6e6e6;letter-spacing:0.164px;-webkit-text-stroke:0.2px #e6e6e6;">Display units</span>
<div class="r" style="left:905.40px;top:519.40px;width:93.00px;height:19.40px;background:#464646;border-radius:4px;"></div>
<div class="r" style="left:986.20px;top:521.50px;width:0.80px;height:15.00px;background:#383838;"></div>
<span class="t " style="left:909.30px;top:517.80px;font:400 11.2px 'Liberation Sans', sans-serif;line-height:20px;color:#ffffff;letter-spacing:-0.387px;-webkit-text-stroke:0.25px #ffffff;">None</span>
<div class="r" style="left:781.90px;top:548.80px;width:12.00px;height:12.00px;background:#454545;border-radius:3px;"></div>
<div class="r" style="left:781.90px;top:575.00px;width:12.00px;height:12.00px;background:#5c5c5c;border-radius:3px;"></div>
<div class="r" style="left:781.90px;top:601.20px;width:12.00px;height:12.00px;background:#5c5c5c;border-radius:3px;"></div>
<span class="t " style="left:799.50px;top:544.80px;font:400 10.6px 'Liberation Sans', sans-serif;line-height:20px;color:#636363;letter-spacing:0.249px;">Show display units label on chart</span>
<span class="t " style="left:799.50px;top:571.10px;font:400 10.6px 'Liberation Sans', sans-serif;line-height:20px;color:#e6e6e6;letter-spacing:0.257px;-webkit-text-stroke:0.2px #e6e6e6;">Logarithmic scale</span>
<span class="t " style="left:918.80px;top:571.40px;font:400 10.6px 'Liberation Sans', sans-serif;line-height:20px;color:#f0f0f0;letter-spacing:-0.139px;-webkit-text-stroke:0.3px #f0f0f0;">Base</span>
<div class="r" style="left:944.70px;top:572.00px;width:54.30px;height:19.30px;background:#444444;border-radius:3px;"></div>
<span class="t " style="left:949.00px;top:572.40px;font:400 11.4px 'Liberation Sans', sans-serif;line-height:20px;color:#a8a8a8;">10</span>
<span class="t " style="left:799.50px;top:597.40px;font:400 10.6px 'Liberation Sans', sans-serif;line-height:20px;color:#e6e6e6;letter-spacing:0.098px;-webkit-text-stroke:0.2px #e6e6e6;">Values in reverse order</span>
<span class="t " style="left:275.20px;top:36.20px;font:400 15.6px 'Liberation Sans', sans-serif;line-height:20px;color:#cfcfcf;">A</span>
<span class="t " style="left:299.60px;top:37.00px;font:400 11.9px 'Liberation Sans', sans-serif;line-height:20px;color:#cfcfcf;">A</span>
<div class="r" style="left:239.00px;top:78.10px;width:14.00px;height:3.60px;background:#2eb34a;"></div>
<span class="t " style="left:275.00px;top:62.50px;font:400 12.3px 'Liberation Sans', sans-serif;line-height:20px;color:#e8e8e8;letter-spacing:0.797px;">A</span>
<div class="r" style="left:271.90px;top:78.10px;width:14.30px;height:3.60px;background:#ffffff;"></div>
<span class="t " style="left:401.60px;top:29.00px;font:400 8.6px 'Liberation Sans', sans-serif;line-height:20px;color:#7a7a7a;letter-spacing:0.519px;">ab</span>
<span class="t " style="left:401.60px;top:35.20px;font:400 8.6px 'Liberation Sans', sans-serif;line-height:20px;color:#7a7a7a;">c</span>
<span class="t" style="left:389px;top:66.6px;font:400 9.6px 'Liberation Sans',sans-serif;line-height:20px;color:#7a7a7a;transform:rotate(-52deg);transform-origin:50% 50%;">ab</span>
<span class="t " style="left:550.20px;top:60.90px;font:400 8.4px 'Liberation Sans', sans-serif;line-height:20px;color:#5e5e5e;">0</span>
<span class="t " style="left:542.60px;top:68.10px;font:400 8.4px 'Liberation Sans', sans-serif;line-height:20px;color:#5e5e5e;letter-spacing:0.048px;">.00</span>
<span class="t " style="left:565.40px;top:60.90px;font:400 8.4px 'Liberation Sans', sans-serif;line-height:20px;color:#5e5e5e;letter-spacing:0.048px;">.00</span>
<span class="t " style="left:570.20px;top:68.10px;font:400 8.4px 'Liberation Sans', sans-serif;line-height:20px;color:#5e5e5e;letter-spacing:0.100px;">.0</span>
<svg class="r" style="left:0;top:0" width="1024" height="609" viewBox="0 0 1024 609">
<path d="M716.6 11 L719.9 14.3 L716.6 17.6 M722.2 11 L725.5 14.3 L722.2 17.6" fill="none" stroke="#e4e4e4" stroke-width="1.7" stroke-linecap="round" stroke-linejoin="round"/>
<path d="M737.5 18.5 C737.5 16.4 735.1 15.4 735.1 12.5 A4.35 4.35 0 0 1 743.8 12.5 C743.8 15.4 741.4 16.4 741.4 18.5 Z" fill="none" stroke="#dcdcdc" stroke-width="1.1" stroke-linejoin="round"/><path d="M737.7 20.4 H741.2" stroke="#dcdcdc" stroke-width="1.3" stroke-linecap="round"/>
<path transform="translate(0 1.2)" d="M854.3 8.8 H865 A1.4 1.4 0 0 1 866.4 10.2 V17 A1.4 1.4 0 0 1 865 18.4 H858.6 L855.6 21.3 V18.4 H854.3 A1.4 1.4 0 0 1 852.9 17 V10.2 A1.4 1.4 0 0 1 854.3 8.8 Z" fill="none" stroke="#f0f0f0" stroke-width="1.1" stroke-linejoin="round"/>
<path transform="translate(0 0.5)" d="M958.5 11.3 H955.2 A1.4 1.4 0 0 0 953.8 12.7 V19.4 A1.4 1.4 0 0 0 955.2 20.8 H962 A1.4 1.4 0 0 0 963.4 19.4 V18.2" fill="none" stroke="#fff" stroke-width="1.1" stroke-linecap="round"/>
<path transform="translate(0 0.5)" d="M961.2 9.2 L965.6 13 L961.2 16.8 V14.6 C958.8 14.6 957.4 15.6 956.6 17.6 C956.6 14 958.2 11.6 961.2 11.4 Z" fill="none" stroke="#fff" stroke-width="1.1" stroke-linejoin="round"/>
<path d="M1007.75 14.70 L1011.00 17.90 L1014.25 14.70" fill="none" stroke="#ffffff" stroke-width="1.2" stroke-linecap="round" stroke-linejoin="round"/>
<path d="M87.30 31.50 L87.30 85.60" stroke="#4a4a4a" stroke-width="1" fill="none" />
<path d="M324.50 31.50 L324.50 85.60" stroke="#4a4a4a" stroke-width="1" fill="none" />
<path d="M436.00 31.50 L436.00 85.60" stroke="#4a4a4a" stroke-width="1" fill="none" />
<path d="M590.60 31.50 L590.60 85.60" stroke="#4a4a4a" stroke-width="1" fill="none" />
<path d="M746.00 31.50 L746.00 85.60" stroke="#4a4a4a" stroke-width="1" fill="none" />
<path d="M831.40 31.50 L831.40 85.60" stroke="#4a4a4a" stroke-width="1" fill="none" />
<path d="M891.50 31.50 L891.50 85.60" stroke="#4a4a4a" stroke-width="1" fill="none" />
<path d="M960.60 31.50 L960.60 85.60" stroke="#4a4a4a" stroke-width="1" fill="none" />
<path d="M181.60 67.00 L181.60 82.00" stroke="#4a4a4a" stroke-width="1" fill="none" />
<path d="M227.80 67.00 L227.80 82.00" stroke="#4a4a4a" stroke-width="1" fill="none" />
<path d="M529.80 67.00 L529.80 82.00" stroke="#4a4a4a" stroke-width="1" fill="none" />
<path d="M381.60 72.30 L381.60 87.50" stroke="#4a4a4a" stroke-width="1" fill="none" />
<path d="M211.30 45.50 L213.60 48.10 L215.90 45.50" fill="none" stroke="#e6e6e6" stroke-width="1.5" stroke-linecap="round" stroke-linejoin="round"/>
<path d="M260.70 45.50 L263.00 48.10 L265.30 45.50" fill="none" stroke="#e6e6e6" stroke-width="1.5" stroke-linecap="round" stroke-linejoin="round"/>
<path d="M166.50 73.70 L168.80 76.30 L171.10 73.70" fill="none" stroke="#e6e6e6" stroke-width="1.5" stroke-linecap="round" stroke-linejoin="round"/>
<path d="M212.70 73.70 L215.00 76.30 L217.30 73.70" fill="none" stroke="#6a6a6a" stroke-width="1.4" stroke-linecap="round" stroke-linejoin="round"/>
<path d="M259.30 73.70 L261.60 76.30 L263.90 73.70" fill="none" stroke="#e6e6e6" stroke-width="1.5" stroke-linecap="round" stroke-linejoin="round"/>
<path d="M292.50 73.70 L294.80 76.30 L297.10 73.70" fill="none" stroke="#e6e6e6" stroke-width="1.5" stroke-linecap="round" stroke-linejoin="round"/>
<path d="M572.20 45.60 L574.50 48.20 L576.80 45.60" fill="none" stroke="#c8c8c8" stroke-width="1.4" stroke-linecap="round" stroke-linejoin="round"/>
<path d="M469.20 73.90 L471.50 76.50 L473.80 73.90" fill="none" stroke="#e6e6e6" stroke-width="1.5" stroke-linecap="round" stroke-linejoin="round"/>
<path d="M512.7 70.1 A3.1 3.1 0 0 1 515.9 73.4 C515.9 77 513.4 79.6 509.6 80.4 L509.4 79.6 C511.6 78.8 512.9 77.6 513.1 76.2 A3.1 3.1 0 0 1 512.7 70.1 Z" fill="#757575"/>
<path d="M729.00 40.60 L731.50 43.40 L734.00 40.60" fill="none" stroke="#8a8a8a" stroke-width="1.2" stroke-linecap="round" stroke-linejoin="round"/>
<path d="M698.50 59.60 L701.00 62.40 L703.50 59.60" fill="none" stroke="#8a8a8a" stroke-width="1.2" stroke-linecap="round" stroke-linejoin="round"/>
<path d="M674.50 79.00 L677.00 81.80 L679.50 79.00" fill="none" stroke="#8a8a8a" stroke-width="1.2" stroke-linecap="round" stroke-linejoin="round"/>
<path d="M808.30 40.70 L810.60 43.30 L812.90 40.70" fill="none" stroke="#f0f0f0" stroke-width="1.5" stroke-linecap="round" stroke-linejoin="round"/>
<path d="M811.50 59.70 L813.80 62.30 L816.10 59.70" fill="none" stroke="#f0f0f0" stroke-width="1.5" stroke-linecap="round" stroke-linejoin="round"/>
<path d="M814.50 79.10 L816.80 81.70 L819.10 79.10" fill="none" stroke="#f0f0f0" stroke-width="1.5" stroke-linecap="round" stroke-linejoin="round"/>
<circle cx="859.5" cy="45.3" r="9" fill="none" stroke="#d8d8d8" stroke-width="1.1"/><path d="M853 51.8 L843 61.8" stroke="#d8d8d8" stroke-width="1.2" stroke-linecap="round"/>
<path d="M874.70 47.10 L877.00 49.70 L879.30 47.10" fill="none" stroke="#f0f0f0" stroke-width="1.5" stroke-linecap="round" stroke-linejoin="round"/>
<path d="M939.10 46.90 L941.40 49.50 L943.70 46.90" fill="none" stroke="#6a6a6a" stroke-width="1.4" stroke-linecap="round" stroke-linejoin="round"/>
<path d="M59.6 103.3 L62.8 97.6 L66 103.3 Z M59.6 108.2 L62.8 114 L66 108.2 Z" fill="#d0d0d0"/>
<path d="M84.6 102 L92 109.4 M92 102 L84.6 109.4" stroke="#666" stroke-width="1.5" fill="none"/>
<path d="M108.8 106.4 L112.4 110 L119.2 102" stroke="#5e5e5e" stroke-width="1.5" fill="none"/>
<path d="M1019 102.8 L1026 102.8 L1022.5 108 Z" fill="#d8d8d8"/>
<path d="M27.8 122.6 L27.8 150.6 L1.2 150.6 Z" fill="#6e6e6e"/>
<circle cx="243.7" cy="290.8" r="1.8" fill="#eaf2fb" stroke="#3f8ae0" stroke-width="1.1"/>
<circle cx="270.8" cy="290.8" r="1.8" fill="#eaf2fb" stroke="#3f8ae0" stroke-width="1.1"/>
<circle cx="243.7" cy="473" r="1.8" fill="#eaf2fb" stroke="#3f8ae0" stroke-width="1.1"/>
<circle cx="270.8" cy="473" r="1.8" fill="#eaf2fb" stroke="#3f8ae0" stroke-width="1.1"/>
<path d="M314.90000000000003 464.6 L314.90000000000003 448.2 L328.6 442.1 L342.3 448.2 L342.3 464.6 Z" fill="#35ab55" stroke="#1f4d30" stroke-width="0.8" stroke-linejoin="round" style="filter:drop-shadow(0 0.5px 0.9px rgba(0,0,0,.6));"/>
<path d="M429.2 461.8 L429.2 420.2 L443.2 408.4 L457.2 420.2 L457.2 461.8 Z" fill="#35ab55" stroke="#1f4d30" stroke-width="0.8" stroke-linejoin="round" style="filter:drop-shadow(0 0.5px 0.9px rgba(0,0,0,.6));"/>
<path d="M544.0999999999999 457.5 L544.0999999999999 376.7 L558.3 353.4 L572.5 376.7 L572.5 457.5 Z" fill="#35ab55" stroke="#1f4d30" stroke-width="0.8" stroke-linejoin="round" style="filter:drop-shadow(0 0.5px 0.9px rgba(0,0,0,.6));"/>
<path d="M659.3 454.6 L659.3 348 L672.9 316.5 L686.5 348 L686.5 454.6 Z" fill="#35ab55" stroke="#1f4d30" stroke-width="0.8" stroke-linejoin="round" style="filter:drop-shadow(0 0.5px 0.9px rgba(0,0,0,.6));"/>
<path d="M510.1 519.3 L510.1 514 L512 512.4 L514.2 512.4 L516.1 514 L516.1 519.3 Z" fill="#35ab55"/>
<circle cx="1008.9" cy="131.7" r="6.3" fill="#b0b0b0"/><path d="M1006.3 129.1 L1011.5 134.3 M1011.5 129.1 L1006.3 134.3" stroke="#2c2c2c" stroke-width="1.5" stroke-linecap="round"/>
<path d="M775 234.2 L777.8 237.2 L780.6 234.2" fill="none" stroke="#f0f0f0" stroke-width="1.3" stroke-linecap="round" stroke-linejoin="round"/>
<g transform="translate(979.8 289.8)"><path d="M0 0 L0 8.7 L8.3 8.7 Z" fill="#d6d6d6"/><path d="M4.4 4.6 L8.4 1.6 A3.15 3.15 0 1 1 10.6 6.9" fill="none" stroke="#d6d6d6" stroke-width="2.2" stroke-linecap="round"/></g>
<g transform="translate(979.8 316.3)"><path d="M0 0 L0 8.7 L8.3 8.7 Z" fill="#d6d6d6"/><path d="M4.4 4.6 L8.4 1.6 A3.15 3.15 0 1 1 10.6 6.9" fill="none" stroke="#d6d6d6" stroke-width="2.2" stroke-linecap="round"/></g>
<g transform="translate(979.8 368.8)"><path d="M0 0 L0 8.7 L8.3 8.7 Z" fill="#d6d6d6"/><path d="M4.4 4.6 L8.4 1.6 A3.15 3.15 0 1 1 10.6 6.9" fill="none" stroke="#d6d6d6" stroke-width="2.2" stroke-linecap="round"/></g>
<g transform="translate(979.8 395.1)"><path d="M0 0 L0 8.7 L8.3 8.7 Z" fill="#5a5a5a"/><path d="M4.4 4.6 L8.4 1.6 A3.15 3.15 0 1 1 10.6 6.9" fill="none" stroke="#5a5a5a" stroke-width="2.2" stroke-linecap="round"/></g>
<circle cx="786.9" cy="447.4" r="5.8" fill="#1f8f3f"/><circle cx="786.9" cy="447.4" r="2.4" fill="#ffffff"/>
<circle cx="787.6" cy="475.3" r="5.8" fill="#595959"/><circle cx="786.9" cy="496.3" r="5.8" fill="#595959"/>
<path d="M990.4 527.4 L994.8 527.4 L992.6 530.6 Z" fill="#e0e0e0"/>
<path d="M792.9 198.2 L800 205.2 L792.4 212.4 L785.3 205.3 Z" fill="none" stroke="#e4e4e4" stroke-width="1.2" stroke-linejoin="round"/><path d="M792.9 203 L792.9 196.4 L795.3 196.4 L795.6 201" fill="none" stroke="#e4e4e4" stroke-width="1.2" stroke-linejoin="round"/>
<path d="M797 202.6 C798.6 200.6 801.6 200.8 802.6 203.4 C803.6 206 803.2 209.4 802.8 212.6 C802.2 209.6 801.6 206.6 800.2 204.8 C799.2 203.6 798 203.2 797 202.6 Z" fill="#3f8fe8"/>
<path d="M825.6 212.7 L835.6 212.7" stroke="#111" stroke-width="1.4"/><path d="M830.6 194.9 L838.8 201.7 L835.8 211.4 L825.4 211.4 L822.4 201.7 Z" fill="none" stroke="#e4e4e4" stroke-width="1.2" stroke-linejoin="round"/>
<path d="M858.2 199 V213.2 M856.6 199 H859.8 M856.6 213.2 H859.8 M862.6 195.7 H877.4 M862.6 194.2 V197.2 M877.4 194.2 V197.2" stroke="#e4e4e4" stroke-width="1.1" fill="none"/><rect x="862.9" y="199" width="14.2" height="14.2" fill="none" stroke="#e4e4e4" stroke-width="1.1"/>
<path d="M870 201.2 V211.2 M865 206.2 H875 M868.4 202.8 L870 201.2 L871.6 202.8 M868.4 209.6 L870 211.2 L871.6 209.6 M866.6 204.6 L865 206.2 L866.6 207.8 M873.4 204.6 L875 206.2 L873.4 207.8" stroke="#3f8fe8" stroke-width="1" fill="none" stroke-linecap="round" stroke-linejoin="round"/>
<rect x="896.6" y="203.2" width="4.6" height="10" fill="#6c6c6c" stroke="#8a8a8a" stroke-width="0.8"/><rect x="902" y="195.6" width="4.6" height="17.6" fill="#2b2b2b" stroke="#e4e4e4" stroke-width="1"/><rect x="907.2" y="198.4" width="5.4" height="15" fill="#3b7ad9"/>
<path d="M11.4 40.4 H27.6 V46 M11.4 40.4 V59.3 H21.4" fill="none" stroke="#8b5a33" stroke-width="2"/>
<path d="M14.2 42.2 V38.6 H17 C17 35.4 22.2 35.4 22.2 38.6 H25 V42.2 Z" fill="#252525" stroke="#8a8a8a" stroke-width="1" stroke-linejoin="round"/>
<rect x="22.4" y="46.6" width="11.4" height="15.2" fill="#252525" stroke="#8a8a8a" stroke-width="1"/>
<path d="M38.60 47.10 L41.20 50.10 L43.80 47.10" fill="none" stroke="#6e6e6e" stroke-width="1.3" stroke-linecap="round" stroke-linejoin="round"/>
<path d="M54.9 34.6 L60 45 M61.3 34.6 L56 45" stroke="#d8d8d8" stroke-width="1.1" fill="none" stroke-linecap="round"/><circle cx="55.3" cy="46.7" r="1.6" fill="none" stroke="#3f9ae0" stroke-width="1.2"/><circle cx="60.6" cy="46.7" r="1.6" fill="none" stroke="#3f9ae0" stroke-width="1.2"/>
<path d="M56 65.3 H51.6 V53.9 H56.6 L57.8 55" fill="none" stroke="#e4e4e4" stroke-width="1.1" stroke-linejoin="round"/><path d="M56.4 56.8 H61.6 L64.6 59.8 V67.6 H56.4 Z" fill="#252525" stroke="#e4e4e4" stroke-width="1.1" stroke-linejoin="round"/><path d="M61.6 56.8 V59.8 H64.6 M58.6 62.2 H62.6 M58.6 64.2 H62.6" fill="none" stroke="#e4e4e4" stroke-width="0.9"/>
<path d="M70.20 59.50 L72.90 62.50 L75.60 59.50" fill="none" stroke="#f0f0f0" stroke-width="1.6" stroke-linecap="round" stroke-linejoin="round"/>
<path d="M63.6 73.6 L59.6 78" stroke="#8a8a8a" stroke-width="1.8" stroke-linecap="round"/><path d="M57.6 76 L62.8 80.4 L57.2 85.6 L52 79.4 Z" fill="none" stroke="#8a8a8a" stroke-width="1" stroke-linejoin="round"/><path d="M52.6 80 L57.2 85.4 L59.6 83.2 C56.8 83 54.4 81.8 52.6 80 Z" fill="#8b5a33"/>
<path d="M284.8 43 L287 40.8 L289.2 43" fill="none" stroke="#3f9ae0" stroke-width="1.1" stroke-linecap="round" stroke-linejoin="round"/><path d="M307.4 40.8 L309.6 43 L311.8 40.8" fill="none" stroke="#3f9ae0" stroke-width="1.1" stroke-linecap="round" stroke-linejoin="round"/>
<path d="M192.7 68.5 H205.3 V80.1 H192.7 Z M199 68.5 V80.1 M192.7 74.3 H205.3" fill="none" stroke="#6f6f6f" stroke-width="1"/>
<path d="M240.9 73.6 L246.3 67.9 L247.9 68.1 L248.5 71.6 L250 73.3 L245.3 77.3 Z" fill="none" stroke="#e4e4e4" stroke-width="1.1" stroke-linejoin="round"/><path d="M249.4 70.8 C250.8 70.2 251.8 71.2 252 73 C252.2 74.4 251.8 75.6 251.2 76.6 C251.2 75 251 73.6 250.4 72.6 C250.2 71.8 249.8 71.2 249.4 70.8 Z" fill="#4a9be6"/>
<path d="M337.00 34.40 H349.60 M339.00 38.20 H347.80 M337.00 41.60 H349.60 " stroke="#6f6f6f" stroke-width="1.1" fill="none"/>
<path d="M358.20 37.20 H370.80 M360.20 40.70 H369.00 M358.20 44.40 H370.80 " stroke="#6f6f6f" stroke-width="1.1" fill="none"/>
<path d="M379.40 40.40 H392.00 M381.40 44.20 H390.20 M379.40 47.70 H392.60 " stroke="#6f6f6f" stroke-width="1.1" fill="none"/>
<path d="M337.00 54.70 H349.60 M337.00 58.40 H346.00 M337.00 62.00 H349.60 M337.00 65.50 H346.00 " stroke="#6f6f6f" stroke-width="1.1" fill="none"/>
<path d="M358.20 54.70 H370.80 M360.20 58.40 H369.00 M358.20 62.00 H370.80 M360.20 65.50 H369.00 " stroke="#6f6f6f" stroke-width="1.1" fill="none"/>
<path d="M379.40 54.70 H392.00 M383.20 58.40 H392.20 M379.40 62.00 H392.00 M383.20 65.50 H392.20 " stroke="#6f6f6f" stroke-width="1.1" fill="none"/>
<path d="M337.00 74.10 H349.60 M344.20 77.80 H349.60 M344.20 81.30 H349.60 M337.00 84.70 H349.60 " stroke="#6f6f6f" stroke-width="1.1" fill="none"/>
<path d="M358.20 74.10 H370.80 M365.40 77.80 H370.80 M365.40 81.30 H370.80 M358.20 84.70 H370.80 " stroke="#6f6f6f" stroke-width="1.1" fill="none"/>
<path d="M337.4 79.5 H343 M339.6 77.3 L337.4 79.5 L339.6 81.7" stroke="#286b8f" stroke-width="1.1" fill="none" stroke-linecap="round" stroke-linejoin="round"/>
<path d="M358.4 79.5 H364 M361.8 77.3 L364 79.5 L361.8 81.7" stroke="#286b8f" stroke-width="1.1" fill="none" stroke-linecap="round" stroke-linejoin="round"/>
<path d="M413.6 41.6 C414.2 44.6 412 46.2 407.6 46 M409.8 43.8 L407.4 46 L409.8 48.2" stroke="#286b8f" stroke-width="1.2" fill="none" stroke-linecap="round" stroke-linejoin="round"/>
<path d="M419.00 40.00 L421.50 42.80 L424.00 40.00" fill="none" stroke="#6e6e6e" stroke-width="1.3" stroke-linecap="round" stroke-linejoin="round"/>
<rect x="399.8" y="53.6" width="13" height="12.8" rx="0.8" fill="none" stroke="#6f6f6f" stroke-width="1"/><path d="M406.3 53.6 V56.6 M406.3 63.6 V66.4" stroke="#6f6f6f" stroke-width="1"/><path d="M399.8 56.6 H412.8 M399.8 63.6 H412.8" stroke="#286b8f" stroke-width="1"/><path d="M402 60.1 H410.6 M403.6 58.5 L402 60.1 L403.6 61.7 M409 58.5 L410.6 60.1 L409 61.7" stroke="#286b8f" stroke-width="1" fill="none" stroke-linecap="round" stroke-linejoin="round"/>
<path d="M419.00 59.60 L421.50 62.40 L424.00 59.60" fill="none" stroke="#6e6e6e" stroke-width="1.3" stroke-linecap="round" stroke-linejoin="round"/>
<path d="M396.2 85.8 L405.8 76.4 M402.4 76.2 L406 76.2 L406 79.8" stroke="#286b8f" stroke-width="1" fill="none" stroke-linecap="round" stroke-linejoin="round"/>
<path d="M411.00 78.60 L413.50 81.40 L416.00 78.60" fill="none" stroke="#6e6e6e" stroke-width="1.3" stroke-linecap="round" stroke-linejoin="round"/>
<rect x="449.4" y="70.4" width="13" height="8.2" fill="none" stroke="#7a7a7a" stroke-width="0.9"/><path d="M453.6 72.4 H452 V76.6 H453.6 M455.4 72.4 H457.6 M460.6 72.4 H459" stroke="#7a7a7a" stroke-width="0.9" fill="none"/>
<path d="M456.3 75.8 V80.4 C456.3 82.2 462.3 82.2 462.3 80.4 V75.8" fill="#252525" stroke="#8b5a33" stroke-width="0.9"/><ellipse cx="459.3" cy="75.8" rx="3" ry="1.3" fill="#252525" stroke="#8b5a33" stroke-width="0.9"/><path d="M456.3 78.2 C456.3 79.9 462.3 79.9 462.3 78.2" fill="none" stroke="#8b5a33" stroke-width="0.9"/>
<path d="M541.4 72 H548.8 M543.8 69.6 L541.4 72 L543.8 74.4" stroke="#286b8f" stroke-width="1.1" fill="none" stroke-linecap="round" stroke-linejoin="round"/>
<path d="M564 77.4 H571.4 M569 75 L571.4 77.4 L569 79.8" stroke="#286b8f" stroke-width="1.1" fill="none" stroke-linecap="round" stroke-linejoin="round"/>
<rect x="605.2" y="35.6" width="3.6" height="3.6" fill="#8b5a33"/><rect x="605.2" y="39.6" width="3.6" height="3.6" fill="#2b6c94"/><rect x="605.2" y="43.6" width="7" height="3.6" fill="#8b5a33"/>
<path d="M602.6 35.3 H616.8 V47.5 H602.6 Z M602.6 39.4 H616.8 M602.6 43.4 H616.8 M605 35.3 V47.5 M609 35.3 V47.5 M612.6 35.3 V47.5" fill="none" stroke="#6a6a6a" stroke-width="0.9"/>
<path d="M607.4 58.6 H613.4 L613.4 59.4 L608 66.2 L607.4 66.2 Z M613.6 62 L616.4 59.6 V66.2 H611 Z" fill="#255f86"/>
<path d="M602.6 54.9 H616.8 V67 H602.6 Z M602.6 58.4 H616.8 M602.6 62.6 H607 M607.2 54.9 V67 M611.8 54.9 V58.4" fill="none" stroke="#6a6a6a" stroke-width="0.9"/>
<path d="M616.8 58.4 L606.2 67.6 M616.8 61.2 L608.6 68" stroke="#7c7c7c" stroke-width="0.9" fill="none"/><path d="M606.4 67.4 L608.4 68 L611 65.6" stroke="#2f86b8" stroke-width="1" fill="none"/>
<path d="M606 75.8 H614 L606 85 Z M613.4 80.4 L616.4 78 V85.8 H609.4 Z" fill="#255f86"/>
<path d="M602.6 74.2 H616.8 V86.2 H602.6 Z M605.6 74.2 V86.2 M602.6 76 H616.8" fill="none" stroke="#6a6a6a" stroke-width="0.9"/>
<path d="M616.8 77.4 L606 87 M616.8 80.2 L608.4 87.4" stroke="#7c7c7c" stroke-width="0.9" fill="none"/><path d="M605.6 87 L608 87.4 L610.6 85" stroke="#2f86b8" stroke-width="1" fill="none"/>
<path d="M758.3 35.4 H771.6 V47.2 H758.3 Z M758.3 39.2 H771.6 M758.3 43.4 H771.6 M762.6 35.4 V39.2 M762.6 43.4 V47.2 M767 35.4 V39.2 M767 43.4 V47.2" fill="none" stroke="#5c5c5c" stroke-width="0.9"/>
<rect x="764.6" y="39.4" width="7" height="3.8" fill="#1e5a82"/><path d="M758.6 41.3 H765 M760.8 39.2 L758.6 41.3 L760.8 43.4" stroke="#2b7299" stroke-width="1.1" fill="none" stroke-linecap="round" stroke-linejoin="round"/>
<path d="M758.3 54.9 H771.6 V58.6 H758.3 Z M758.3 62.8 H771.6 V66.6 H758.3 Z M758.3 58.6 V62.8 M762.6 54.9 V58.6 M767 54.9 V58.6 M762.6 62.8 V66.6 M767 62.8 V66.6" fill="none" stroke="#5c5c5c" stroke-width="0.9" stroke-dasharray="2.2 0.8"/>
<rect x="760.8" y="58.6" width="4.6" height="4.4" fill="#1e5a82"/><path d="M767.5 58.8 L771 62.8 M771 58.8 L767.5 62.8" stroke="#8b5a33" stroke-width="1" fill="none"/>
<path d="M758.3 75 H771.6 V86.8 H758.3 Z M758.3 78.2 H771.6 M758.3 83.4 H771.6 M761.4 75 V86.8 M768.4 75 V86.8" fill="none" stroke="#e2e2e2" stroke-width="0.9"/><rect x="761.4" y="78.2" width="7" height="5.2" fill="#3f7fe0"/><path d="M760.2 73.4 H769.6" stroke="#3f7fe0" stroke-width="1" stroke-dasharray="1.4 0.7"/>
<path d="M920 36.6 H911.3 V60.4 H928.6 V50" fill="none" stroke="#1f6685" stroke-width="1"/>
<g transform="translate(919.9 49.3) rotate(40)" fill="#252525" stroke="#1f6685" stroke-width="1"><rect x="-6.4" y="-2.6" width="12.8" height="5.2" rx="0.6"/><path d="M-4.2 0 H4.2" /></g>
<g transform="translate(927.2 41.4) rotate(40)" fill="#252525" stroke="#1f6685" stroke-width="1"><rect x="-6.6" y="-1.4" width="13.2" height="3.2"/><rect x="-6.6" y="1.8" width="13.2" height="1.8"/><rect x="-2.2" y="-5.4" width="4.6" height="4"/></g>
<path d="M975.2 34.8 H1002.8 V61.4 H975.2 Z M975.2 38 H1002.8 M975.2 45.8 H1002.8 M975.2 53.6 H1002.8 M984.4 38 V61.4 M993.6 38 V61.4" fill="none" stroke="#5c5c5c" stroke-width="1"/>
<circle cx="987.9" cy="45.8" r="8.6" fill="#252525" stroke="#6a6a6a" stroke-width="1.1"/><path d="M994 52 L1002.6 61.2" stroke="#6a6a6a" stroke-width="1.2"/><rect x="983.6" y="44.4" width="2.4" height="5.6" fill="#4a4a4a"/><rect x="986.2" y="41" width="2.6" height="9" fill="#5a5a5a"/><rect x="989" y="42.6" width="2.6" height="7.4" fill="#255f86"/>
</svg>
</div></body></html>
